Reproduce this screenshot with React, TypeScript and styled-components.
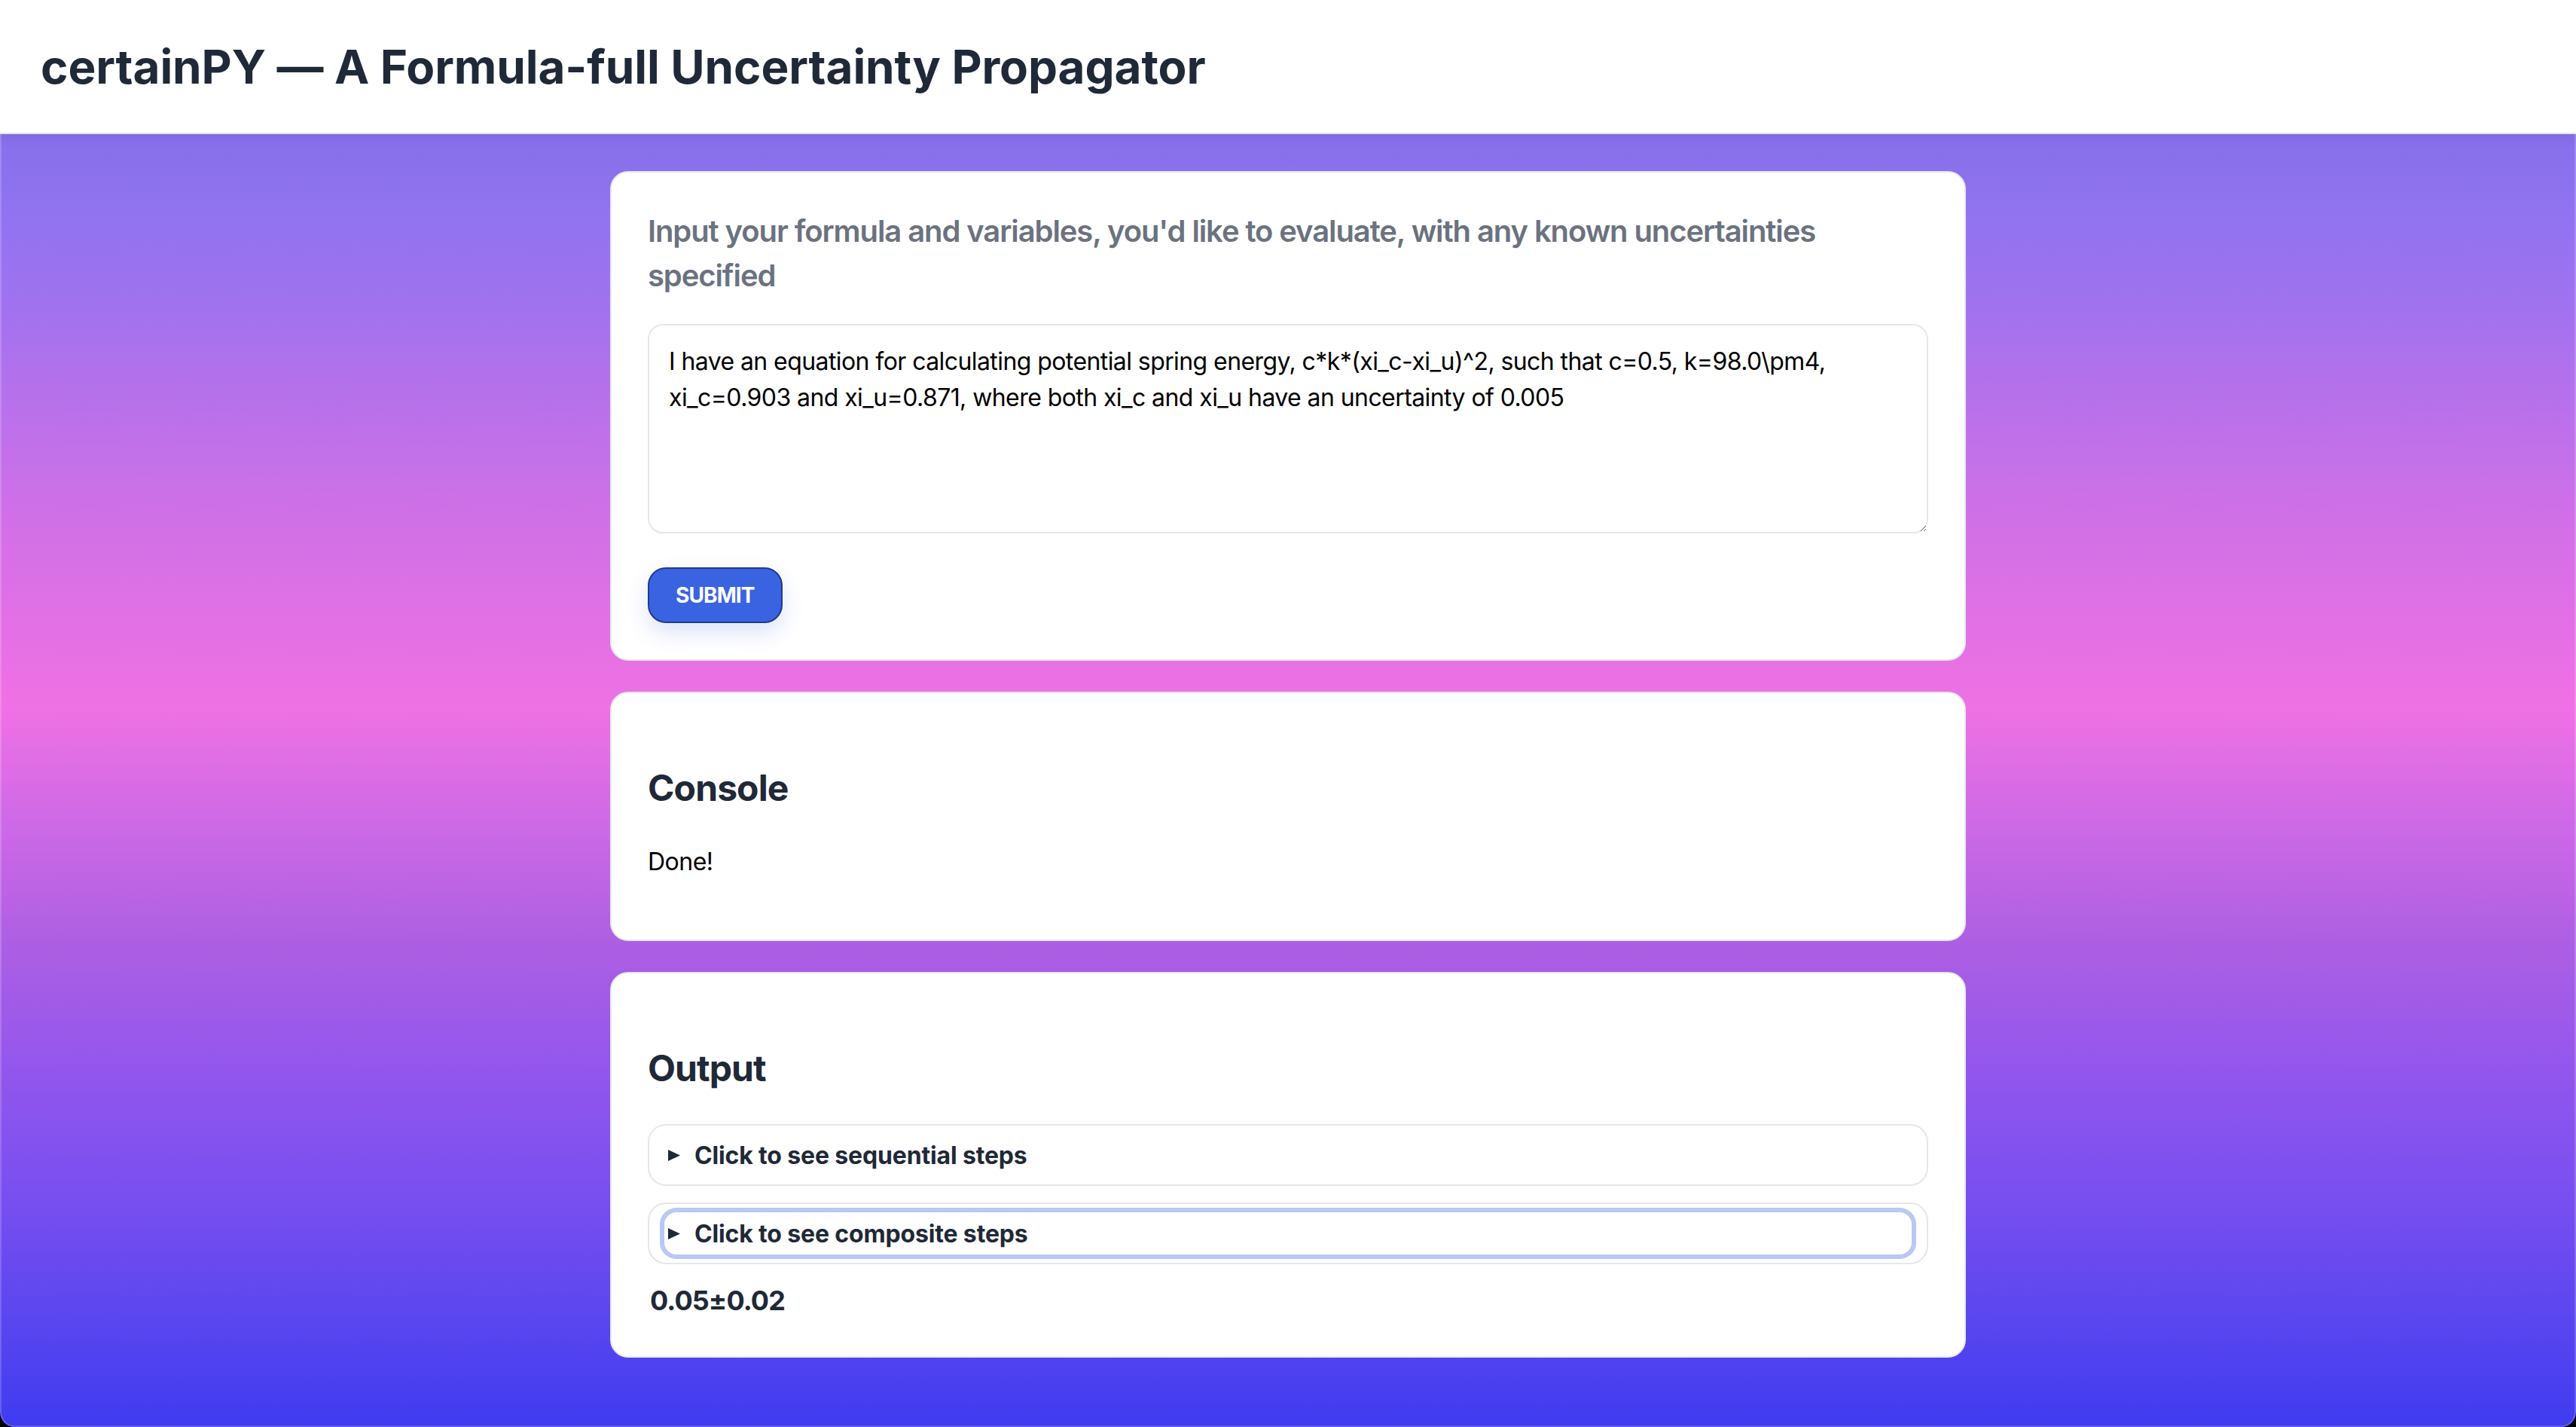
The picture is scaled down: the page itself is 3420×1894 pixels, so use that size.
import styled, { createGlobalStyle } from 'styled-components';

const GlobalStyle = createGlobalStyle`
  html, body {
    margin: 0;
    padding: 0;
    background: #000;
  }
  body {
    font-family: Inter, "Noto Sans", sans-serif;
  }
  * {
    box-sizing: border-box;
  }
`;

const formula =
  'I have an equation for calculating potential spring energy, c*k*(xi_c-xi_u)^2, such that c=0.5, k=98.0\\pm4, xi_c=0.903 and xi_u=0.871, where both xi_c and xi_u have an uncertainty of 0.005';

export default function App() {
  return (
    <Page>
      <GlobalStyle />
      <Header>
        <Title>certainPY — A Formula-full Uncertainty Propagator</Title>
      </Header>
      <Main>
        <Card>
          <Prompt>
            Input your formula and variables, you'd like to evaluate, with any known uncertainties
            specified
          </Prompt>
          <FormulaInput defaultValue={formula} spellCheck={false} />
          <SubmitButton type="button">Submit</SubmitButton>
        </Card>

        <Card>
          <SectionTitle>Console</SectionTitle>
          <ConsoleLine>Done!</ConsoleLine>
        </Card>

        <Card>
          <SectionTitle>Output</SectionTitle>
          <Steps>
            <StepSummary>
              <Marker />
              Click to see sequential steps
            </StepSummary>
          </Steps>
          <Steps>
            <StepSummary $focused>
              <Marker />
              Click to see composite steps
            </StepSummary>
          </Steps>
          <Result>0.05±0.02</Result>
        </Card>
      </Main>
    </Page>
  );
}

function Marker() {
  return (
    <MarkerIcon viewBox="0 0 16 15" aria-hidden="true">
      <polygon points="0,0 16,7.5 0,15" fill="currentColor" />
    </MarkerIcon>
  );
}

const Page = styled.div`
  min-height: 100vh;
  display: flex;
  flex-direction: column;
  border-radius: 0 0 20px 20px;
  overflow: hidden;
  box-shadow: inset 0 0 0 2px rgba(255, 255, 255, 0.18);
  background: linear-gradient(
    to bottom,
    #8670e9 178px,
    #9373f0 300px,
    #a072ee 400px,
    #b271eb 500px,
    #d270e6 700px,
    #ef71e3 940px,
    #cc69e6 1100px,
    #ad5fe2 1250px,
    #9657ec 1400px,
    #774ef0 1600px,
    #5a46ef 1750px,
    #3f3bf0 1894px
  );
`;

const Header = styled.header`
  background: #fff;
  border-bottom: 2px solid #e5e7eb;
  padding: 53px 54px 51px;
  box-shadow: 0 4px 14px rgba(40, 20, 90, 0.08);
`;

const Title = styled.h1`
  margin: 0;
  font-size: 62px;
  line-height: 72px;
  font-weight: 700;
  letter-spacing: -0.1px;
  color: #1f2937;
`;

const Main = styled.main`
  width: 1800px;
  margin: 0 auto;
  padding: 49px 0 60px;
  display: flex;
  flex-direction: column;
  gap: 41px;
`;

const Card = styled.section`
  background: #fff;
  border: 2px solid #e5e7eb;
  border-radius: 24px;
  padding: 48px;
`;

const Prompt = styled.p`
  margin: 0 0 35px;
  font-size: 40px;
  line-height: 59px;
  font-weight: 600;
  letter-spacing: -1.1px;
  color: #6b7280;
`;

const FormulaInput = styled.textarea`
  display: block;
  width: 100%;
  height: 278px;
  padding: 24px 24px 24px 26px;
  border: 2px solid #e5e7eb;
  border-radius: 20px;
  font-family: Inter, "Noto Sans", sans-serif;
  font-size: 32px;
  line-height: 48px;
  letter-spacing: -0.58px;
  color: #000;
  background: #fff;
  resize: vertical;
  outline: none;
`;

const SubmitButton = styled.button`
  margin-top: 45px;
  height: 74px;
  padding: 0 35px;
  background: #3a63e2;
  border: 2px solid #1e3a8a;
  border-radius: 24px;
  color: #fff;
  font-family: Inter, "Noto Sans", sans-serif;
  font-size: 28px;
  font-weight: 700;
  letter-spacing: -0.9px;
  text-transform: uppercase;
  box-shadow: 0 12px 28px rgba(59, 99, 226, 0.18);
  cursor: pointer;
`;

const SectionTitle = styled.h2`
  margin: 46px 0 42px;
  font-size: 48px;
  line-height: 64px;
  font-weight: 700;
  letter-spacing: -0.9px;
  color: #1f2937;
`;

const ConsoleLine = styled.p`
  margin: 0 0 31px;
  font-size: 32px;
  line-height: 48px;
  letter-spacing: -0.5px;
  color: #000;
`;

const Steps = styled.details`
  border: 2px solid #e5e7eb;
  border-radius: 24px;
  padding: 11px 20px;
  margin-bottom: 22px;
`;

const StepSummary = styled.summary<{ $focused?: boolean }>`
  display: flex;
  align-items: center;
  gap: 19px;
  height: 56px;
  padding-left: 5px;
  list-style: none;
  font-size: 32px;
  font-weight: 700;
  letter-spacing: -0.15px;
  color: #1f2937;
  cursor: pointer;
  border-radius: 16px;
  box-shadow: ${(p) => (p.$focused ? '0 0 0 6px #b9c8f4' : 'none')};

  &::-webkit-details-marker {
    display: none;
  }
`;

const MarkerIcon = styled.svg`
  width: 16px;
  height: 15px;
  flex-shrink: 0;
`;

const Result = styled.div`
  padding-left: 3px;
  font-size: 36px;
  line-height: 52px;
  font-weight: 700;
  letter-spacing: -0.9px;
  color: #1f2937;
`;
